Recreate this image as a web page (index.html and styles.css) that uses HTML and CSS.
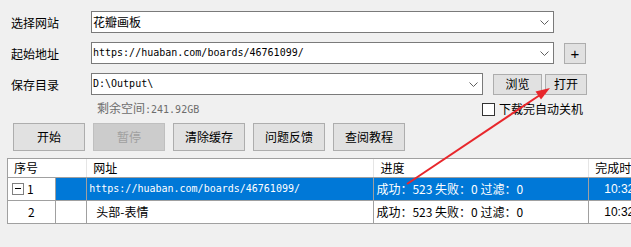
FILE: index.html
```html
<!DOCTYPE html>
<html lang="zh-CN">
<head>
  <meta charset="UTF-8" />
  <title>花瓣画板下载</title>
  <link rel="stylesheet" href="styles.css">
</head>
<body>
  <div class="app">
    <div class="field-row">
      <span class="field-label">选择网站</span>
      <div class="combo combo-wide">
        <span class="combo-text">花瓣画板</span>
        <svg class="chevron" width="9" height="5" viewBox="0 0 9 5"><polyline points="0.5,0.5 4.5,4.5 8.5,0.5" /></svg>
      </div>
    </div>

    <div class="field-row">
      <span class="field-label">起始地址</span>
      <div class="combo combo-wide">
        <span class="combo-text mono">https://huaban.com/boards/46761099/</span>
        <svg class="chevron" width="9" height="5" viewBox="0 0 9 5"><polyline points="0.5,0.5 4.5,4.5 8.5,0.5" /></svg>
      </div>
      <button class="btn btn-plus">+</button>
    </div>

    <div class="field-row">
      <span class="field-label">保存目录</span>
      <div class="combo combo-short">
        <span class="combo-text mono">D:\Output\</span>
        <svg class="chevron" width="9" height="5" viewBox="0 0 9 5"><polyline points="0.5,0.5 4.5,4.5 8.5,0.5" /></svg>
      </div>
      <button class="btn btn-browse">浏览</button>
      <button class="btn btn-open">打开</button>
    </div>

    <div class="info-row">
      <span class="free-space">剩余空间<span class="mono">:241.92GB</span></span>
      <label class="check">
        <span class="check-box"></span>
        <span>下载完自动关机</span>
      </label>
    </div>

    <div class="action-row">
      <button class="btn btn-action">开始</button>
      <button class="btn btn-action" disabled>暂停</button>
      <button class="btn btn-action">清除缓存</button>
      <button class="btn btn-action">问题反馈</button>
      <button class="btn btn-action">查阅教程</button>
    </div>

    <div class="task-table">
      <div class="task-head">
        <div class="cell col-index">序号</div>
        <div class="cell col-url">网址</div>
        <div class="cell col-progress">进度</div>
        <div class="cell col-time">完成时间</div>
      </div>
      <div class="task-row selected">
        <div class="cell col-no"><span class="tree-toggle"></span>1</div>
        <div class="cell col-blank"></div>
        <div class="cell col-url mono">https://huaban.com/boards/46761099/</div>
        <div class="cell col-progress">成功：523 失败：0 过滤：0</div>
        <div class="cell col-time">10:32:15</div>
      </div>
      <div class="task-row">
        <div class="cell col-no centered">2</div>
        <div class="cell col-blank"></div>
        <div class="cell col-url child">头部-表情</div>
        <div class="cell col-progress">成功：523 失败：0 过滤：0</div>
        <div class="cell col-time">10:32:15</div>
      </div>
    </div>
  </div>

  <!-- red annotation arrow drawn over the window -->
  <svg class="annotation" width="631" height="247" viewBox="0 0 631 247">
    <line x1="407" y1="184" x2="540" y2="95" />
    <polygon points="550,88 541,99.5 535.5,91.5" />
  </svg>
</body>
</html>
```

FILE: styles.css
```css
html, body {
  margin: 0;
  padding: 0;
  overflow: hidden;
}

body {
  width: 631px;
  height: 247px;
  background-color: #f0f0f0;
  font-family: "Noto Sans CJK SC", "Liberation Sans", sans-serif;
  font-size: 12px;
  color: #000;
  position: relative;
}

.mono {
  font-family: "DejaVu Sans Mono", "Noto Sans CJK SC", monospace;
  font-size: 10px;
}

.app {
  padding: 11px 0 0 0;
}

.field-row {
  display: flex;
  align-items: center;
  height: 22px;
  margin-bottom: 9px;
  padding-left: 11px;
}

.field-label {
  width: 80px;
  padding-top: 2px;
  line-height: 14px;
}

.combo {
  box-sizing: border-box;
  height: 22px;
  background: #fff;
  border: 1px solid #7a7a7a;
  display: flex;
  align-items: center;
  padding: 0 4px 0 1px;
}

.combo-wide {
  width: 463px;
}

.combo-short {
  width: 392px;
}

.combo-text {
  flex: 1;
  line-height: 14px;
  white-space: nowrap;
}

.chevron {
  fill: none;
  stroke: #606060;
  stroke-width: 1;
}

.btn {
  box-sizing: border-box;
  font-family: "Noto Sans CJK SC", "Liberation Sans", sans-serif;
  font-size: 12px;
  color: #000;
  background: #e1e1e1;
  border: 1px solid #adadad;
  border-radius: 0;
  padding: 0;
  line-height: 14px;
}

.btn:disabled {
  background: #cccccc;
  border-color: #bfbfbf;
  color: #a0a0a0;
}

.btn-plus {
  width: 22px;
  height: 21px;
  margin-left: 10px;
  margin-top: 1px;
  font-family: "Liberation Sans", sans-serif;
  font-size: 15px;
}

.btn-browse {
  width: 49px;
  height: 21px;
  margin-left: 10px;
}

.btn-open {
  width: 42px;
  height: 21px;
  margin-left: 3px;
}

.info-row {
  display: flex;
  align-items: center;
  height: 18px;
  margin-top: -4px;
  padding-left: 97px;
}

.free-space {
  width: 385px;
  color: #6d6d6d;
  line-height: 14px;
}

.check {
  display: flex;
  align-items: center;
  gap: 4px;
  line-height: 14px;
}

.check-box {
  box-sizing: border-box;
  width: 13px;
  height: 13px;
  background: #fff;
  border: 1px solid #333;
}

.action-row {
  display: flex;
  gap: 8px;
  margin-top: 5px;
  padding-left: 13px;
}

.btn-action {
  width: 72px;
  height: 28px;
}

.task-table {
  margin: 7px 0 0 7px;
  width: 720px;
  border-top: 1px solid #a0a0a0;
  border-left: 1px solid #a0a0a0;
  background: #fff;
}

.task-head,
.task-row {
  display: flex;
  border-bottom: 1px solid #a0a0a0;
}

.task-head {
  height: 18px;
}

.task-row {
  height: 22px;
}

.cell {
  box-sizing: border-box;
  display: flex;
  align-items: center;
  white-space: nowrap;
  overflow: hidden;
  border-right: 1px solid #a0a0a0;
  line-height: 14px;
}

.task-head .cell {
  border-right-color: #e5e5e5;
  padding-left: 6px;
}

.col-index {
  width: 80px;
}

.col-no {
  width: 48px;
  padding-left: 4px;
}

.col-no.centered {
  justify-content: center;
  padding-left: 0;
}

.col-blank {
  width: 32px;
}

.col-url {
  width: 290px;
  padding-left: 2px;
}

.col-url.child {
  padding-left: 9px;
}

.col-progress {
  width: 217px;
  padding-left: 2px;
}

.col-time {
  width: 140px;
  padding-left: 15px;
}

.task-head .col-time {
  padding-left: 6px;
}

.task-row .col-time {
  font-family: "Liberation Sans", sans-serif;
}

.tree-toggle {
  box-sizing: border-box;
  width: 12px;
  height: 12px;
  margin-right: 3px;
  border: 1px solid #808080;
  background: #fff;
  position: relative;
}

.tree-toggle::after {
  content: "";
  position: absolute;
  left: 2px;
  right: 2px;
  top: 4px;
  height: 1px;
  background: #000;
}

.task-row.selected .cell {
  background: #0078d7;
  color: #fff;
}

.task-row.selected .col-no {
  background: #fff;
  color: #000;
}

.annotation {
  position: absolute;
  left: 0;
  top: 0;
  pointer-events: none;
}

.annotation line {
  stroke: #e8272c;
  stroke-width: 2;
}

.annotation polygon {
  fill: #e8272c;
}
```
